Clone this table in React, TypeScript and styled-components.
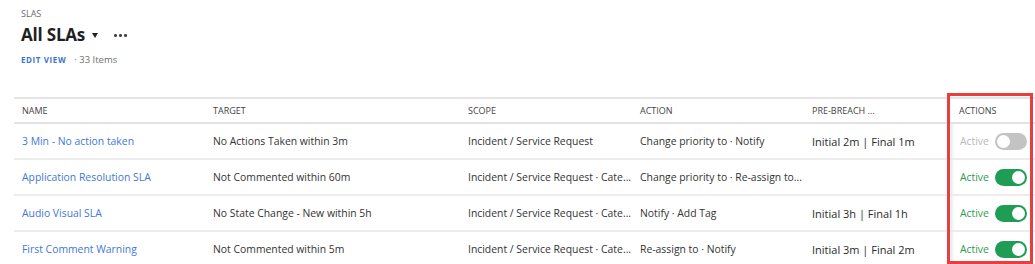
import React from 'react';
import styled, { createGlobalStyle } from 'styled-components';

const GlobalStyle = createGlobalStyle`
  html, body {
    margin: 0;
    padding: 0;
    background: #ffffff;
    font-family: "Open Sans", "Liberation Sans", sans-serif;
    color: #333;
  }
`;

interface Sla {
  name: string;
  target: string;
  scope: string;
  action: string;
  preBreach: string;
  active: boolean;
}

const SLAS: Sla[] = [
  {
    name: '3 Min - No action taken',
    target: 'No Actions Taken within 3m',
    scope: 'Incident / Service Request',
    action: 'Change priority to · Notify',
    preBreach: 'Initial 2m | Final 1m',
    active: false,
  },
  {
    name: 'Application Resolution SLA',
    target: 'Not Commented within 60m',
    scope: 'Incident / Service Request · Cate...',
    action: 'Change priority to · Re-assign to...',
    preBreach: '',
    active: true,
  },
  {
    name: 'Audio Visual SLA',
    target: 'No State Change - New within 5h',
    scope: 'Incident / Service Request · Cate...',
    action: 'Notify · Add Tag',
    preBreach: 'Initial 3h | Final 1h',
    active: true,
  },
  {
    name: 'First Comment Warning',
    target: 'Not Commented within 5m',
    scope: 'Incident / Service Request · Cate...',
    action: 'Re-assign to · Notify',
    preBreach: 'Initial 3m | Final 2m',
    active: true,
  },
];

const Page = styled.div`
  width: 1035px;
  height: 264px;
  overflow: hidden;
`;

const Heading = styled.header`
  padding: 8px 0 0 21px;
  display: flex;
  flex-direction: column;
`;

const Crumb = styled.div`
  font-size: 9px;
  color: #6b6b6b;
  line-height: 12px;
`;

const TitleRow = styled.div`
  display: flex;
  align-items: center;
  gap: 7px;
  margin-top: 2px;
  height: 24px;
`;

const Title = styled.h1`
  margin: 0;
  font-size: 17px;
  font-weight: 700;
  color: #1f1f1f;
  letter-spacing: -0.2px;
`;

const Caret = styled.span`
  width: 0;
  height: 0;
  border-left: 3.5px solid transparent;
  border-right: 3.5px solid transparent;
  border-top: 5px solid #222;
  margin-top: 3px;
`;

const More = styled.span`
  display: flex;
  gap: 2.5px;
  margin-left: 9px;
  margin-top: 3px;

  i {
    width: 2.5px;
    height: 2.5px;
    border-radius: 50%;
    background: #444;
  }
`;

const MetaRow = styled.div`
  display: flex;
  align-items: center;
  gap: 8px;
  margin-top: 7px;
  height: 12px;
`;

const EditView = styled.a`
  font-size: 8px;
  font-weight: 700;
  letter-spacing: 0.6px;
  color: #3b74cc;
`;

const Count = styled.span`
  font-size: 9.5px;
  color: #707070;
`;

const Table = styled.div`
  position: relative;
  margin: 32px 0 0 14px;
  border-top: 2px solid #e4e4e4;
`;

const Row = styled.div<{ $head?: boolean }>`
  display: grid;
  grid-template-columns: 191px 255px 172px 172px 147px 84px;
  align-items: center;
  height: ${(p) => (p.$head ? '23px' : '34px')};
  border-bottom: 2px solid ${(p) => (p.$head ? '#e2e2e2' : '#ececec')};
`;

const Cell = styled.div<{ $head?: boolean; $strong?: boolean }>`
  padding-left: 8px;
  font-size: ${(p) => (p.$head ? '9px' : p.$strong ? '11px' : '10.4px')};
  color: ${(p) => (p.$head ? '#444' : p.$strong ? '#2a2a2a' : '#333')};
  white-space: nowrap;
  overflow: hidden;
`;

const NameLink = styled.a`
  color: #3f78d6;
  text-decoration: none;
`;

const ActionsCell = styled.div`
  display: flex;
  align-items: center;
  justify-content: space-between;
  padding: 0 8px 0 9px;
  height: 100%;
  box-shadow: inset 4px 0 4px -4px rgba(0, 0, 0, 0.18);
`;

const StatusLabel = styled.span<{ $on: boolean }>`
  font-size: 10.4px;
  color: ${(p) => (p.$on ? '#2f9a52' : '#b8b8b8')};
`;

const Switch = styled.span<{ $on: boolean }>`
  position: relative;
  width: 32px;
  height: 17px;
  border-radius: 9px;
  background: ${(p) => (p.$on ? '#1f9d55' : '#c3c3c3')};

  &::after {
    content: '';
    position: absolute;
    top: 2px;
    left: ${(p) => (p.$on ? '17px' : '2px')};
    width: 13px;
    height: 13px;
    border-radius: 50%;
    background: #fff;
  }
`;

const Highlight = styled.div`
  position: absolute;
  left: 933px;
  top: -6px;
  width: 80px;
  height: 165px;
  border: 3px solid #eb3d3d;
  pointer-events: none;
`;

const App = () => {
  return (
    <Page>
      <GlobalStyle />
      <Heading>
        <Crumb>SLAS</Crumb>
        <TitleRow>
          <Title>All SLAs</Title>
          <Caret />
          <More>
            <i />
            <i />
            <i />
          </More>
        </TitleRow>
        <MetaRow>
          <EditView>EDIT VIEW</EditView>
          <Count>· 33 Items</Count>
        </MetaRow>
      </Heading>

      <Table>
        <Row $head>
          <Cell $head>NAME</Cell>
          <Cell $head>TARGET</Cell>
          <Cell $head>SCOPE</Cell>
          <Cell $head>ACTION</Cell>
          <Cell $head>PRE-BREACH ...</Cell>
          <Cell $head>ACTIONS</Cell>
        </Row>
        {SLAS.map((sla) => (
          <Row key={sla.name}>
            <Cell>
              <NameLink>{sla.name}</NameLink>
            </Cell>
            <Cell>{sla.target}</Cell>
            <Cell>{sla.scope}</Cell>
            <Cell>{sla.action}</Cell>
            <Cell $strong>{sla.preBreach}</Cell>
            <ActionsCell>
              <StatusLabel $on={sla.active}>Active</StatusLabel>
              <Switch $on={sla.active} />
            </ActionsCell>
          </Row>
        ))}
        <Highlight />
      </Table>
    </Page>
  );
};

export default App;
